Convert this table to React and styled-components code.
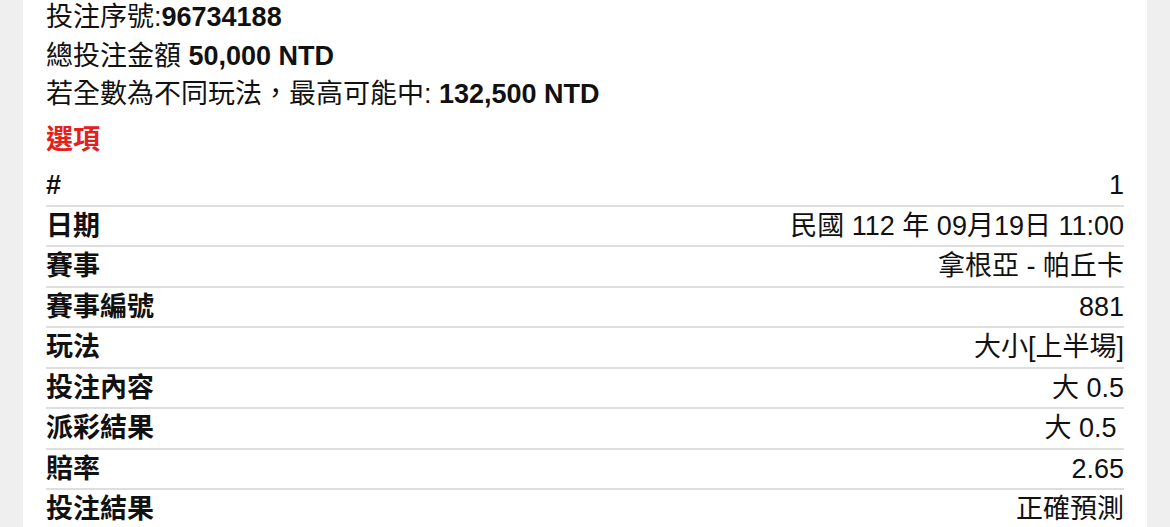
import React from 'react'
import styled, { createGlobalStyle } from 'styled-components'

const GlobalStyle = createGlobalStyle`
  html, body {
    margin: 0;
    padding: 0;
    background: #efefef;
    overflow: hidden;
  }
  body {
    font-family: "Liberation Sans", "Noto Sans CJK TC", sans-serif;
    color: #111;
  }
`

const Page = styled.div`
  padding: 0 23px;
  margin-top: -2px;
`

const Card = styled.div`
  background: #fff;
  padding: 0 23px 40px;
`

const InfoLine = styled.div`
  font-size: 27px;
  line-height: 38.5px;
  white-space: nowrap;

  b {
    font-weight: 700;
  }
`

const SectionTitle = styled.div`
  margin-top: 7px;
  font-size: 27px;
  line-height: 38.5px;
  font-weight: 700;
  color: #e3201b;
`

const Table = styled.div`
  margin-top: 7px;
  display: flex;
  flex-direction: column;
`

const Row = styled.div`
  display: flex;
  justify-content: space-between;
  align-items: center;
  font-size: 27px;
  line-height: 38.5px;
  border-bottom: 2px solid #dedede;
  white-space: pre;
`

const Label = styled.span`
  font-weight: 700;
`

const Value = styled.span`
  font-weight: 400;
`

const rows = [
  ['#', '1'],
  ['日期', '民國 112 年 09月19日 11:00'],
  ['賽事', '拿根亞 - 帕丘卡'],
  ['賽事編號', '881'],
  ['玩法', '大小[上半場]'],
  ['投注內容', '大 0.5'],
  ['派彩結果', '大 0.5 '],
  ['賠率', '2.65'],
  ['投注結果', '正確預測'],
]

export default function App() {
  return (
    <Page>
      <GlobalStyle />
      <Card>
        <InfoLine>投注序號:<b>96734188</b></InfoLine>
        <InfoLine>總投注金額 <b>50,000 NTD</b></InfoLine>
        <InfoLine>若全數為不同玩法，最高可能中: <b>132,500 NTD</b></InfoLine>
        <SectionTitle>選項</SectionTitle>
        <Table>
          {rows.map(([k, v]) => (
            <Row key={k}>
              <Label>{k}</Label>
              <Value>{v}</Value>
            </Row>
          ))}
        </Table>
      </Card>
    </Page>
  )
}
